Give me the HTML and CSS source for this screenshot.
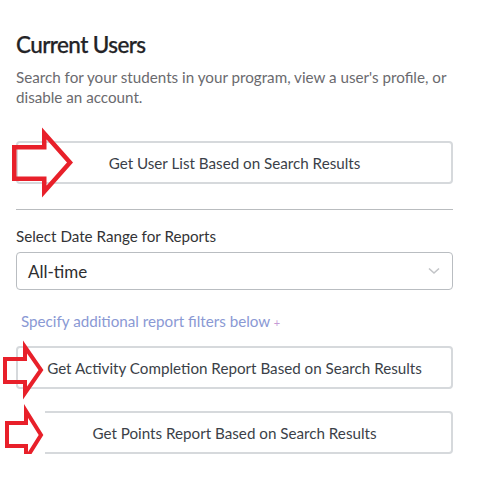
FILE: index.html
```html
<!DOCTYPE html>
<html>
<head>
<meta charset="utf-8">
<link rel="stylesheet" href="styles.css">
</head>
<body>
<div class="page">
  <h1 class="title">Current Users</h1>
  <p class="desc">Search for your students in your program, view a user's profile, or disable an account.</p>

  <div class="btn-row row1">
    <button class="btn">Get User List Based on Search Results</button>
    <svg class="arrow arrow1" width="62" height="70" viewBox="0 0 62 70">
      <polygon points="2.25,19.25 32.25,19.25 32.25,5.5 58,34.5 32.25,63.5 32.25,50.75 2.25,50.75" />
    </svg>
  </div>

  <hr class="divider">

  <div class="field-label">Select Date Range for Reports</div>
  <div class="select">
    <span class="select-value">All-time</span>
    <svg class="chevron" width="12" height="8" viewBox="0 0 12 8"><polyline points="1,1.5 6,6 11,1.5"/></svg>
  </div>

  <div class="filters">Specify additional report filters below <span class="plus">+</span></div>

  <div class="btn-row row2">
    <button class="btn">Get Activity Completion Report Based on Search Results</button>
    <svg class="arrow arrow2" width="41" height="56" viewBox="0 0 41 56">
      <polygon points="2,17 22,17 22,5 38,28 22,51 22,40 2,40" />
    </svg>
  </div>

  <div class="btn-row row3">
    <button class="btn">Get Points Report Based on Search Results</button>
    <div class="cover"></div>
    <svg class="arrow arrow3" width="40" height="58" viewBox="0 0 40 58">
      <polygon points="2,17 21,17 21,5 36,29 21,53 21,40 2,40" />
    </svg>
  </div>
</div>
</body>
</html>
```

FILE: styles.css
```css
* { box-sizing: border-box; }
body {
  margin: 0;
  background: #ffffff;
  font-family: Lato, "Open Sans", Arial, sans-serif;
}
.page {
  padding: 0 42px 0 16px;
  width: 495px;
}
.title {
  margin: 30px 0 0;
  font-size: 22.5px;
  line-height: 30px;
  font-weight: 500;
  letter-spacing: -0.6px;
  color: #232326;
  -webkit-text-stroke: 0.25px #232326;
}
.desc {
  margin: 7px 0 0;
  font-size: 15.2px;
  line-height: 20px;
  color: #6a6a6e;
}
.btn-row {
  position: relative;
}
.btn {
  display: block;
  width: 100%;
  height: 43px;
  background: #ffffff;
  border: 2px solid #d6d9dc;
  border-radius: 4px;
  font-family: inherit;
  font-size: 15.2px;
  color: #3b3f48;
  padding: 0;
}
.row1 { margin-top: 34px; }
.row2 { margin-top: 13px; }
.row3 { margin-top: 22px; }
.arrow {
  position: absolute;
  overflow: visible;
}
.arrow polygon {
  fill: none;
  stroke: #e8202a;
  stroke-width: 4.5;
  stroke-linejoin: miter;
}
.arrow1 { left: -4px; top: -13px; }
.arrow2 { left: -13px; top: -4px; }
.arrow3 { left: -11px; top: -5px; }
.arrow2 polygon, .arrow3 polygon { stroke-width: 4; }
.cover {
  position: absolute;
  left: -2px;
  top: -2px;
  width: 31px;
  height: 47px;
  background: #ffffff;
}
.divider {
  margin: 25px 0 0;
  border: 0;
  border-top: 1px solid #b9bcbf;
  height: 0;
}
.field-label {
  margin-top: 16px;
  font-size: 15.2px;
  line-height: 20px;
  color: #333336;
}
.select {
  margin-top: 6px;
  height: 38px;
  border: 1px solid #b9bdc1;
  border-radius: 4px;
  display: flex;
  align-items: center;
  justify-content: space-between;
  padding: 0 12px 0 11px;
}
.select-value {
  font-size: 17px;
  color: #2e2e30;
}
.chevron polyline {
  fill: none;
  stroke: #c2c4c7;
  stroke-width: 1.6;
}
.filters {
  margin-top: 21px;
  padding-left: 5px;
  font-size: 15.2px;
  line-height: 20px;
  color: #8a99d4;
}
.plus {
  font-size: 11px;
  color: #c69ad6;
}
```
